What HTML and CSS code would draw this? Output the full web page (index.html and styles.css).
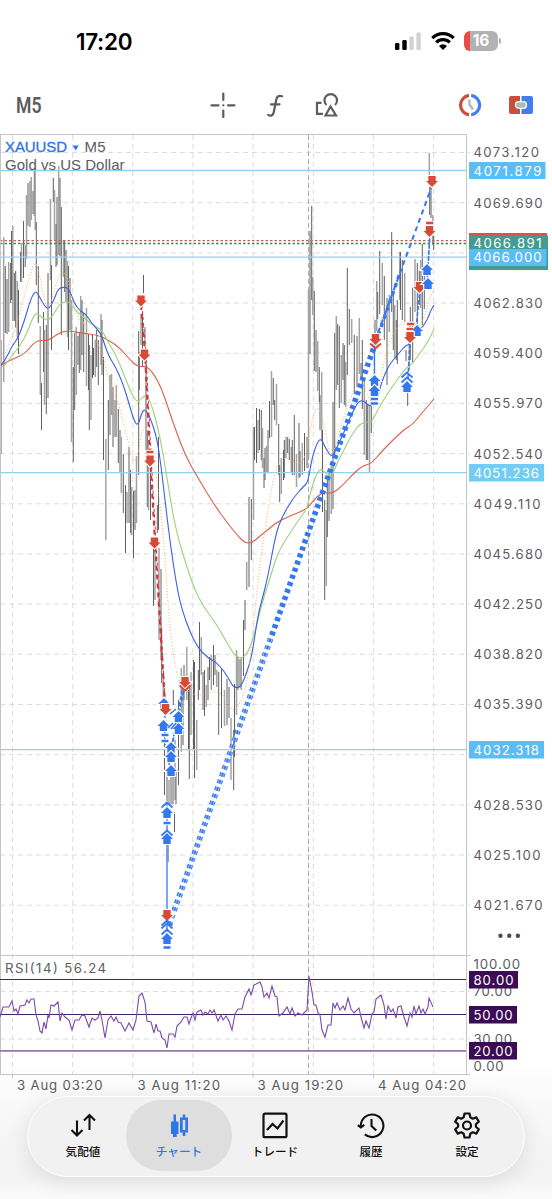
FILE: index.html
```html
<!DOCTYPE html>
<html lang="ja">
<head>
<meta charset="UTF-8">
<meta name="viewport" content="width=device-width, initial-scale=1.0">
<title>XAUUSD M5</title>
<link rel="stylesheet" href="styles.css">
</head>
<body>

<div class="status-bar">
    <span class="time">17:20</span>
    <div class="status-icons">
        <svg width="27" height="20" viewBox="0 0 27 20">
            <rect x="0" y="12" width="4.4" height="7" rx="1.3" fill="#000"/>
            <rect x="7.3" y="9" width="4.4" height="10" rx="1.3" fill="#000"/>
            <rect x="14.4" y="5.5" width="4.4" height="13.5" rx="1.3" fill="#d2d2d2"/>
            <rect x="21.4" y="1.5" width="4.4" height="17.5" rx="1.3" fill="#d2d2d2"/>
        </svg>
        <svg class="wifi" width="24" height="20" viewBox="0 0 24 20">
            <path d="M1.3 7.2a15 15 0 0 1 21.4 0M5.2 11.4a9.8 9.8 0 0 1 13.6 0" fill="none" stroke="#000" stroke-width="3.2"/>
            <path d="M12 19L8 15a5.700 5.700 0 0 1 8 0z" fill="#000"/>
        </svg>
        <div class="battery"><span>16</span></div>
    </div>
</div>

<div class="toolbar">
    <span class="period">M5</span>
    <div class="tools">
        <svg width="26" height="26" viewBox="0 0 26 26" fill="none" stroke="#5c5c5c" stroke-width="2.200" stroke-linecap="round">
            <path d="M13.300 1.500v6.500M13.300 18.500v6.500M1.500 13.300h7M18 13.300h6.500M13.300 13.300h.1"/>
        </svg>
        <svg width="18" height="26" viewBox="0 0 18 26" fill="none" stroke="#5c5c5c" stroke-width="2.200" stroke-linecap="round">
            <path d="M16 4.300c-3-1.400-5 .2-5.700 3.200L7.800 20c-.6 3.200-2.600 4.500-5.600 3M5 12.300h8.500"/>
        </svg>
        <svg width="24" height="26" viewBox="0 0 24 26" fill="none" stroke="#5c5c5c" stroke-width="2.200">
            <path d="M6.500 10.800H2v11h6M11.500 13a6.300 6.300 0 1 1 8.500 0M15.500 14.500l-5 9h10.500z"/>
        </svg>
    </div>
    <div class="orders">
        <svg width="26" height="24" viewBox="0 0 26 24" fill="none" stroke-width="3.200">
            <path d="M12 2.400a9.900 9.800 0 0 0 0 19.400" stroke="#c94f3d"/>
            <path d="M14.200 2.400a9.900 9.800 0 0 1 0 19.400" stroke="#427fe8"/>
            <path d="M12.500 6.500v5l3.500 5" stroke="#a9bcbb" stroke-width="2.400"/>
        </svg>
        <svg width="26" height="24" viewBox="0 0 26 24">
            <path d="M3 3h9v18H3a2 2 0 0 1-2-2V5a2 2 0 0 1 2-2z" fill="#c94f3d"/>
            <path d="M13.500 3H23a2 2 0 0 1 2 2v14a2 2 0 0 1-2 2h-9.500z" fill="#427fe8"/>
            <rect x="7.500" y="8.700" width="11" height="6.600" rx="3" fill="#a9bcbb" stroke="#fff" stroke-width="1.200"/>
        </svg>
    </div>
</div>

<svg class="chart" id="chart" width="552" height="962" viewBox="0 134 552 962">
    <g id="grid" class="grid"></g>
    <path class="day" d="M308.500 135V1074"/>
    <g id="bars"></g>
    <g class="level">
        <path d="M0 170.500H466M0 257.200H466M0 472.600H466M0 749.700H466"/>
    </g>
    <path class="ask" d="M0 240.700H466"/>
    <path class="bid" d="M0 243.500H466"/>
    <g id="averages"></g>
    <g class="title">
        <text x="5" y="152" class="symbol" textLength="62">XAUUSD</text>
        <path d="M72.700 145.500h6l-3 5z" fill="#2f73e8"/>
        <text x="84.500" y="152" textLength="21">M5</text>
        <text x="5" y="170.300" textLength="119.500">Gold vs US Dollar</text>
    </g>
    <g id="trades"></g>
    <g id="arrows"></g>
    <path class="frame" d="M0 134.500H466.500V1074.500M0 955.500H470M0 1074.500H470M.5 134V1074M12.500 1074v4M132.800 1074v4M253 1074v4M373.500 1074v4"/>
    <g id="prices" class="axis"></g>
    <g class="tags">
        <rect x="469" y="233" width="78" height="12" fill="#d9534a"/>
        <rect x="469" y="235.500" width="79" height="34.500" fill="#449c90"/>
        <text x="473.500" y="248.300">4066.891</text>
        <rect x="469" y="249" width="77.500" height="17" fill="#5bbdf5"/>
        <text x="473.500" y="262.300">4066.000</text>
        <rect x="469" y="162" width="76.500" height="17" fill="#5bbdf5"/>
        <text x="473.500" y="175.500">4071.879</text>
        <rect x="469" y="464" width="75" height="17.500" fill="#72ccf5"/>
        <text x="473.500" y="477.600" class="narrow">4051.236</text>
        <rect x="469" y="741" width="75" height="17.500" fill="#5bbdf5"/>
        <text x="473.500" y="754.600" class="narrow">4032.318</text>
    </g>
    <g fill="#4d4d52">
        <circle cx="500.500" cy="935.700" r="2.200"/>
        <circle cx="509.200" cy="935.700" r="2.200"/>
        <circle cx="517.900" cy="935.700" r="2.200"/>
    </g>

    <!-- RSI -->
    <path class="rsi-level" d="M0 979.500H466M0 1014.500H466"/>
    <path class="rsi-level low" d="M0 1050.800H466"/>
    <g id="rsi"></g>
    <g class="axis">
        <text x="5" y="972.700" textLength="101">RSI(14) 56.24</text>
        <text x="473.500" y="969.300" textLength="46.500">100.00</text>
        <text x="473.500" y="996" textLength="38.500">70.00</text>
        <text x="473.500" y="1043.500" textLength="38.500">30.00</text>
        <text x="473.500" y="1070.500" textLength="30">0.00</text>
        <text x="17" y="1090.300" textLength="85.500">3 Aug 03:20</text>
        <text x="137.500" y="1090.300" textLength="82.500">3 Aug 11:20</text>
        <text x="257.500" y="1090.300" textLength="85.500">3 Aug 19:20</text>
        <text x="378" y="1090.300" textLength="88">4 Aug 04:20</text>
    </g>
    <g class="rsi-tags">
        <rect x="469" y="971" width="49" height="17.500"/>
        <rect x="469" y="1006" width="48" height="17.500"/>
        <rect x="469" y="1042" width="48" height="17.500"/>
        <text x="473.500" y="984.500" textLength="40">80.00</text>
        <text x="473.500" y="1019.600" textLength="39">50.00</text>
        <text x="473.500" y="1055.800" textLength="39">20.00</text>
    </g>
</svg>

<div class="tab-bar">
    <div class="tab">
        <svg width="28" height="28" viewBox="0 0 28 28" fill="none" stroke="#111" stroke-width="2.100">
            <path d="M8 9.500v15M2.500 19l5.500 5.500 5.500-5.500M20.500 19V4M15 9.500L20.500 4l5.500 5.500"/>
        </svg>
        <span>気配値</span>
    </div>
    <div class="tab active">
        <svg width="28" height="28" viewBox="0 0 28 28" fill="#2f76e8">
            <path d="M8.500 3.500h2.500v7h2.500v12.500h-1.800v3H8v-3H6V10.500h2.500z"/>
            <path d="M17.700 3.500h2.600v3H23v15h-2.700v3.500h-2.600v-3.500H15v-15h2.700zM17.700 9v10h2.600V9z" fill-rule="evenodd"/>
        </svg>
        <span>チャート</span>
    </div>
    <div class="tab">
        <svg width="28" height="28" viewBox="0 0 28 28" fill="none" stroke="#111" stroke-width="2.200">
            <rect x="2.500" y="2.700" width="23" height="23.500" rx="1.500"/>
            <path d="M6 19l5.500-6 5 4.500L22.500 9.500"/>
        </svg>
        <span>トレード</span>
    </div>
    <div class="tab">
        <svg width="28" height="28" viewBox="0 0 28 28" fill="none" stroke="#111" stroke-width="2.100">
            <path d="M3.800 15a11.300 11.300 0 1 1 4 8.400M.8 14.200l3 2.300 3.500-2.600M14.500 8v7l4.800 4.500"/>
        </svg>
        <span>履歴</span>
    </div>
    <div class="tab">
        <svg width="28" height="28" viewBox="0 0 28 28" fill="none" stroke="#111" stroke-width="2.200" stroke-linejoin="round">
            <path d="M11.500 2.500h5l.8 3.800 2.400 1.400 3.600-1.300 2.500 4.200-2.900 2.600v2.600l2.900 2.600-2.500 4.200-3.600-1.300-2.400 1.400-.8 3.800h-5l-.8-3.800-2.400-1.400-3.600 1.300-2.500-4.200 2.900-2.600v-2.600l-2.900-2.600 2.500-4.200 3.600 1.300 2.400-1.400z"/>
            <circle cx="14" cy="14.500" r="4"/>
        </svg>
        <span>設定</span>
    </div>
</div>

<script src="chart.js"></script>
</body>
</html>
```
FILE: styles.css
```css
body {
    margin: 0;
    height: 1199px;
    overflow: hidden;
    display: flex;
    flex-direction: column;
    background: linear-gradient(#fff 0, #fff 1060px, #f8f8f8 1110px, #f2f2f2 1175px, #fbfbfb 1199px);
    font-family: Inter, "Noto Sans CJK JP", sans-serif;
    color: #4d4d52;
}

.status-bar {
    height: 80px;
    flex: none;
    box-sizing: border-box;
    padding: 2px 50px 0 76px;
    display: flex;
    align-items: center;
    justify-content: space-between;
    color: #000;
}

.time {
    font-size: 22.5px;
    font-weight: 600;
    letter-spacing: -0.3px;
}

.status-icons {
    display: flex;
    align-items: center;
    gap: 9px;
}

.battery {
    position: relative;
    width: 34px;
    height: 20px;
    margin-right: 4px;
    border-radius: 6px;
    background: linear-gradient(90deg, #e84b48 0, #e84b48 6px, #b2b2b2 6px);
    color: #fff;
    font-size: 15.5px;
    font-weight: 700;
    line-height: 20px;
    text-align: center;
}

.battery::after {
    content: "";
    position: absolute;
    right: -3px;
    top: 7px;
    width: 2px;
    height: 6px;
    border-radius: 0 2px 2px 0;
    background: #b2b2b2;
}

.toolbar {
    height: 54px;
    flex: none;
    box-sizing: border-box;
    padding: 0 18px 4px 16px;
    display: flex;
    align-items: center;
}

.period {
    width: 194px;
    font-family: Roboto, sans-serif;
    font-size: 22px;
    font-weight: 600;
    color: #5c5c5c;
    transform: scaleX(0.8);
    transform-origin: left;
}

.tools {
    display: flex;
    gap: 30px;
    flex: 1;
}

.tools svg:last-child {
    margin-left: 1px;
}

.orders {
    display: flex;
    gap: 25px;
}

.orders svg:first-child {
    margin-left: -1px;
}

.chart {
    display: block;
    flex: none;
}

.chart text {
    font-family: Inter, sans-serif;
    font-size: 13.2px;
    fill: #5c5c62;
}

.chart .title text {
    font-family: "Liberation Sans", Arial, sans-serif;
    font-size: 15px;
}

.chart .title .symbol {
    fill: #2f73e8;
    stroke: #2f73e8;
    stroke-width: 0.3px;
}

.grid path {
    stroke: #dcdcdc;
    stroke-width: 1;
    stroke-dasharray: 5 4;
}

.day {
    stroke: #aaa;
    stroke-dasharray: 5 3;
}

.level {
    stroke: #93d1f1;
    stroke-width: 1.3;
}

.ask,
.bid {
    stroke-width: 1.3;
    stroke-dasharray: 2.5 2;
}

.ask {
    stroke: #c65d59;
}

.bid {
    stroke: #3c8b52;
}

.frame {
    fill: none;
    stroke: #c6c6c8;
}

#averages path {
    fill: none;
    stroke-width: 1.1;
    stroke-linejoin: round;
}

.chart .tags text,
.chart .rsi-tags text {
    fill: #fff;
}

.rsi-tags rect {
    fill: #3c0b55;
}

.rsi-level {
    stroke: #4b2166;
    stroke-width: 1.2;
}

.rsi-level.low {
    stroke: #9478a5;
    stroke-width: 1.7;
}

.tab-bar {
    width: 498px;
    height: 81px;
    flex: none;
    margin: 0 auto;
    box-sizing: border-box;
    padding: 3px 9px 3px 7px;
    display: flex;
    justify-content: space-between;
    border: 1.5px solid #fff;
    border-radius: 41px;
    background: #f1f1f1;
    box-shadow: 0 4px 22px rgba(0, 0, 0, 0.1);
}

.tab {
    width: 96px;
    height: 71px;
    display: flex;
    flex-direction: column;
    align-items: center;
    gap: 4px;
    box-sizing: border-box;
    padding-top: 11px;
    color: #111;
    font-size: 11.6px;
    font-weight: 500;
    line-height: 18px;
}

.tab.active {
    width: 106px;
    margin: 0 -5px;
    border-radius: 35px;
    background: #dedede;
    color: #2f76e8;
}
```
FILE: chart.js
```javascript
const el = id => document.getElementById(id);

// grid and price scale
let grid = '';
let prices = '';
for (let i = 0; i < 16; i++) {
    const y = 152.5 + i * 50.18;
    grid += `<path d="M0 ${y.toFixed(1)}H470"/>`;
    if (i != 2 && i != 12) {
        const price = (4073.12 - i * 3.43).toFixed(3);
        const width = i == 0 ? 65.5 : i == 7 || i == 14 ? 67 : 69;
        prices += `<text x="473.5" y="${(y + 4.9).toFixed(1)}" textLength="${width}">${price}</text>`;
    }
}
for (let i = 0; i < 8; i++) {
    const x = 12.5 + i * 60.15;
    grid += `<path d="M${x.toFixed(1)} 135V1074"/>`;
}
grid += '<path d="M0 991.5H470M0 1039H470"/>';
el('grid').innerHTML = grid;
el('prices').innerHTML = prices;
document.querySelectorAll('.tags text').forEach(t =>
    t.setAttribute('textLength', t.classList.contains('narrow') ? 65.5 : 68));

// x, high, low
const bars = `1,340,454 3.7,237,382 5.3,266,333 7,279,334 8.7,262,332 10.7,263,303 11.5,231,300 12.8,226,321
14.3,273,321 15.7,271,328 17.3,281,337 18.5,290,354 20.5,252,282 21.5,243,282 23.5,221,278 25.2,245,267
26.5,195,259 28,183,226 30,181,227 31.3,177,220 33,191,214 34.3,170,216 35.2,168,230 36.3,222,285
38.3,266,323 40.3,326,395 41.5,383,430 43.5,312,372 44.5,330,405 46.3,325,414 48,273,398 50.5,199,280
51.5,265,350 53.3,178,202 54.5,190,240 56,224,267 57,197,265 58.7,166,255 60,178,256 61.3,207,335
63.5,240,277 64.7,241,292 66,250,302 67.5,261,337 68.5,266,350 70,278,330 71.5,300,442 73.3,367,462
74.7,333,410 76.3,327,395 78,336,365 79.3,332,373 80.7,296,370 82,300,355 83.7,313,372 86.5,308,386
88.5,334,390 89.3,345,430 91,355,420 92.5,334,378 93.5,348,375 95.3,340,377 96.7,330,367 98.3,340,385
101,314,365 102,320,375 103.5,357,460 105.8,439,540 108.3,400,470 110,375,435 111.5,374,415 113,387,447
115,400,437 116.3,385,437 118.3,409,463 120,430,472 121.3,437,493 123.3,454,513 125.5,485,553 127,492,523
129,447,523 130.5,470,533 131.5,487,535 133.5,491,558 135,490,530 136.5,456,523 138.7,331,475 139.3,352,390
141,314,345 143.5,275,293 142.5,313,367 145,327,347 146,360,450 147.3,430,507 148.5,440,510 150.5,467,520
153.5,548,606 155,548,600 157.3,505,533 158.5,437,530 159,548,640 161,569,660 161.7,628,683 163.3,673,700
164.5,725,795 167,770,801 169,780,804 171,775,804 173,770,804 175,740,800 176,770,804 173.3,690,705
168.3,845,862 174.5,812,832 178.5,700,785 181.3,668,752 183,680,745 184,665,700 186.8,647,700 188.5,690,750 189.3,680,779
191,672,735 193.5,660,750 194.5,662,778 196.7,720,770 198.3,670,700 199.5,622,690 201.3,637,675 203,672,710
204.5,670,716 206.3,685,707 208,667,700 209.5,657,680 211.3,655,690 213.5,645,685 215,655,675 216.8,670,687
218.7,672,735 221.5,669,728 224.5,690,726 227,679,725 229,687,718 231,718,780 233.7,730,790 234.5,684,757
236.5,650,715 238,657,690 240,659,688 241.3,657,690 243.5,620,676 245,600,630 246.7,562,590 249,497,587
251.3,499,560 253.5,427,520 254.5,427,460 256.5,408,463 258,420,453 259.5,409,450 261.3,410,460 262.5,428,468
264,458,488 265,448,480 266.5,446,473 268,430,472 269.5,401,438 271.5,371,437 273.3,378,405 274.7,400,420
276.5,384,425 278.7,424,475 279.7,465,502 281.3,458,494 283.5,450,480 284.3,440,478 286,437,458 287.7,437,453
289.3,439,460 291.3,447,472 292.3,440,475 294.3,415,475 296.5,454,487 299,423,478 300,451,477 302.3,443,475
304.5,433,471 307,437,468 308.5,290,460 310,231,354 311.7,206,300 312.7,277,315 314.3,291,371 316,330,372
317.7,341,391 319.3,367,402 320,395,430 321.7,372,440 322.5,430,512 324.7,500,600 326.3,510,586 327.3,480,537
329,470,521 331.3,465,514 333,402,509 334.7,333,455 336.3,316,390 337.7,324,385 339.3,326,408 341.3,355,403
343,343,380 344.3,345,405 345.7,362,407 347.3,268,375 349.3,309,345 351.7,319,343 354.3,335,394 357,336,386
359.3,318,374 361,363,380 362.3,340,409 364.3,380,455 366.3,400,460 367.7,405,460 369.5,405,473 371.3,385,433
375,320,350 376.7,281,331 377.7,292,319 379.7,251,314 382.3,263,305 384.3,276,340 387,298,385 389.3,295,332
391.7,232,312 393.3,295,350 394.7,305,358 396.3,320,360 397.3,300,364 399.7,252,300 400.5,252,310 402.3,260,320
404.7,273,322 406,350,361 407.7,393,406 409.3,325,370 410.3,307,360 412.7,287,363 415,259,312 417.3,263,330
419.3,270,305 420.7,260,308 422.3,244,325 424.3,268,309 429.3,153,175 429.7,187,215 431,188,218 432.7,215,245 433.7,236,250`;
el('bars').innerHTML = bars.split(/\s+/).map((b, i) => {
    const [x, high, low] = b.split(',');
    const gray = i % 3 == 1;
    return `<path d="M${x} ${high}V${low}" stroke="${gray ? '#a3a3a3' : '#606060'}" stroke-width="${gray ? 1.5 : 1}"/>`;
}).join('');

// moving averages
const averages = {
    '#dc5f4b': '0,366 10,360 25,354 36,340 48,341 56,335 66,330 80,333 98,335 110,341 120,348 130,360 138,367 145,366 152,371 162,389 172,420 185,455 198,478 215,506 229,525 238,536 245,543 252,543 260,536 270,528 277,522 290,516 307,509 312,502 322,492 332,494 342,486 355,472 364,465 371,464 383,450 396,437 406,428 412,425 422,413 434,399',
    '#9ed077': '0,367 4,367 13,354 20,346 27,333 35,312 40,316 48,321 54,314 60,303 69,301 75,310 82,316 94,326 102,330 108,342 116,355 124,375 132,395 138,403 145,394 150,400 158,427 165,465 172,510 179,542 188,570 194,588 203,606 215,622 222,634 230,648 236,657 244,658 250,648 256,628 262,603 270,578 278,552 290,533 300,518 307,509 311,490 316,475 321,468 326,474 332,476 338,461 345,448 352,434 360,424 366,422 372,422 378,409 388,393 397,380 406,368 412,364 420,353 428,342 434,329',
    '#3c60e6': '0,366 5,361 12,346 18,338 24,322 31,298 36,290 41,300 48,311 54,300 58,289 63,287 69,288 74,303 80,311 86,314 92,324 101,333 108,355 115,366 122,381 128,400 134,421 138,426 142,412 145,409 150,417 157,438 161,466 165,500 170,542 177,588 182,610 190,632 198,648 208,658 216,662 224,671 230,681 234,688 241,687 247,672 252,655 258,615 262,600 268,576 276,533 282,517 293,498 304,486 308,482 312,458 317,443 321,438 326,449 332,458 338,445 346,428 352,413 358,402 363,400 370,407 376,403 382,381 388,367 394,359 400,352 405,346 410,344 416,335 424,325 428,318 431,310 434,305',
    '#f0b870': '0,364 5,355 15,330 22,305 30,275 35,260 40,275 44,300 49,312 54,290 60,272 67,273 72,300 78,320 84,322 90,335 98,342 104,360 110,386 118,402 124,425 131,455 135,463 139,450 142,430 147,425 152,450 157,480 163,530 167,590 171,640 178,682 186,690 200,697 215,690 225,697 232,712 240,705 248,680 253,630 257,590 262,550 268,510 274,475 280,459 290,458 300,465 306,455 311,425 317,404 323,418 329,452 333,455 340,430 348,404 356,385 363,383 370,400 375,410 380,385 386,350 393,335 400,323 407,325 412,320 420,330 428,305 433,290'
};

// curve through the midpoints of the points
function smooth(points) {
    const p = points.split(' ').map(s => s.split(',').map(Number));
    let d = `M${p[0]}`;
    for (let i = 1; i < p.length - 1; i++) {
        d += `Q${p[i]} ${(p[i][0] + p[i + 1][0]) / 2},${(p[i][1] + p[i + 1][1]) / 2}`;
    }
    return d + `L${p[p.length - 1]}`;
}
el('averages').innerHTML = Object.keys(averages).map(c =>
    `<path d="${smooth(averages[c])}" stroke="${c}" ${c == '#f0b870' ? 'stroke-dasharray="1 2"' : ''}/>`).join('');

// closed trades: colour, width, dash, path
const trades = [
    ['#d0333a', 2, '5 4', 'M141 305L145 354L150 455L155 542L165 705'],
    ['#d0333a', 1, '3 3', 'M142 305L146 354L151 455L156 542L165.5 705'],
    ['#3478f0', 5.6, '4 3.5', 'M169 925L375.5 343'],
    ['#ffffff', 0.5, '', 'M168 925L270 636M170.5 925L272 639'],
    ['#3478f0', 2, '5 4', 'M375 341L432 186'],
    ['#3478f0', 3.4, '4 4.5', 'M375.5 343L401 270'],
    ['#3478f0', 1.3, '', 'M167 802V942M374.5 345V400'],
    ['#3478f0', 1.5, '4 2', 'M165 714V745M171 748L185 686M169 765L182 690M408 378L410 341M416 328L420 290M428 266L430 232M427 285L430 235'],
];
el('trades').innerHTML = trades.map(t =>
    `<path d="${t[3]}" fill="none" stroke="${t[0]}" stroke-width="${t[1]}" stroke-dasharray="${t[2]}"/>`).join('');

const up = 'M0 -6L6 0H3.7V5H-3.7V0H-6z';
const down = 'M0 6L6 0H3.7V-5H-3.7V0H-6z';
const chevron = 'M-5.5 2.5L0 -2.5L5.5 2.5';
let arrows = '';
function arrow(shape, color, x, y) {
    arrows += `<path d="${shape}" transform="translate(${x} ${y})" fill="${color}" stroke="#fff" stroke-width="2.2" paint-order="stroke"/>`;
}
function mark(x, y, flip) {
    arrows += `<path d="${chevron}" transform="translate(${x} ${y}) scale(1 ${flip ? -1 : 1})" fill="none" stroke="${flip ? '#d84a35' : '#3478f0'}" stroke-width="1.7"/>`;
}
function dash(x, y, color) {
    arrows += `<path d="M${x - 3.5} ${y}h7" stroke="#fff" stroke-width="4.5"/><path d="M${x - 3.5} ${y}h7" stroke="${color}" stroke-width="2.5"/>`;
}
[[164, 704], [163.5, 726], [178.5, 729], [178.5, 717], [171, 748], [171, 757], [171, 771], [167, 813], [167, 839],
 [374.5, 381], [374.5, 391], [407, 387], [417, 331], [167, 939]]
    .forEach(a => arrow(up, '#3478f0', a[0], a[1]));
[[141, 300.5], [144.5, 354.5], [150, 460.5], [154.5, 542.5], [165.5, 709], [185, 682], [375.5, 339], [410, 337],
 [419.5, 287], [429.5, 231], [432, 181], [167, 915]]
    .forEach(a => arrow(down, '#d84a35', a[0], a[1]));
arrow(up, '#3478f0', 427, 270);
arrow(up, '#3478f0', 428, 284);
[[167, 805], [167, 833], [167, 923], [167, 926], [167, 932], [407, 375], [407, 380]].forEach(a => mark(a[0], a[1]));
mark(185, 688, true);
mark(375.5, 346, true);
[[165, 735], [165, 741], [167, 823], [167, 947.5], [374.5, 399], [374.5, 403.5]].forEach(a => dash(a[0], a[1], '#3478f0'));
[[150, 452], [429.5, 223], [410.5, 324], [410, 329]].forEach(a => dash(a[0], a[1], '#d84a35'));
arrows += '<path d="M170 714l6-5M168 728l5-5M171 729l5-6" stroke="#3478f0" stroke-width="1.5"/>';
el('arrows').innerHTML = arrows;

const rsi = `0,1017 3,1007 9,1007 12,1001 14,1011 16,1009 18,1014 20,1006 25,1005 27,1000 29,1003 31,999 34,999 36,1015
38,1021 40,1031 42,1033 44,1022 46,1029 48,1015 49,1018 51,1005 54,1006 58,1002 60,1021 62,1013 65,1017 69,1020 72,1030
75,1020 79,1020 82,1015 85,1016 89,1027 92,1018 95,1020 98,1018 100,1011 102,1020 105,1038 108,1020 111,1016 114,1021 116,1017 118,1022
121,1023 125,1031 129,1023 133,1030 136,1020 139,996 142,993 145,1002 147,1021 151,1022 154,1033 156,1024 158,1031 160,1031
162,1038 165,1040 167,1048 169,1034 173,1034 175,1037 177,1026 181,1022 184,1017 187,1017 189,1024 191,1018 193,1013 195,1020
197,1012 201,1010 203,1015 205,1012 208,1014 210,1010 212,1013 214,1010 218,1021 221,1015 223,1020 226,1016 229,1021 232,1030
235,1014 238,1009 242,1009 245,997 249,989 251,995 254,985 260,982 262,987 264,997 267,993 269,998 272,986 275,996 277,997
279,1016 283,1013 287,1007 290,1014 292,1008 295,1016 298,1013 302,1015 307,1010 309,976 312,992 314,1005 316,1005 318,1013 320,1015
322,1030 325,1037 328,1025 331,1025 333,1003 335,1008 337,1003 340,1010 343,1006 345,1010 348,998 351,1009 354,1013 359,1008
361,1017 364,1028 366,1021 369,1028 372,1014 374,1012 376,999 381,995 384,1005 386,1019 388,1006 391,1012 393,1009 396,1018
398,1007 401,1006 404,1017 407,1026 410,1013 412,1017 414,1006 416,1014 419,1006 421,1013 423,1009 425,1014 428,1007 429,998 433,1007`;
el('rsi').innerHTML = `<polyline points="${rsi}" fill="none" stroke="#7a4ba8" stroke-width="1.1"/>`;
```
